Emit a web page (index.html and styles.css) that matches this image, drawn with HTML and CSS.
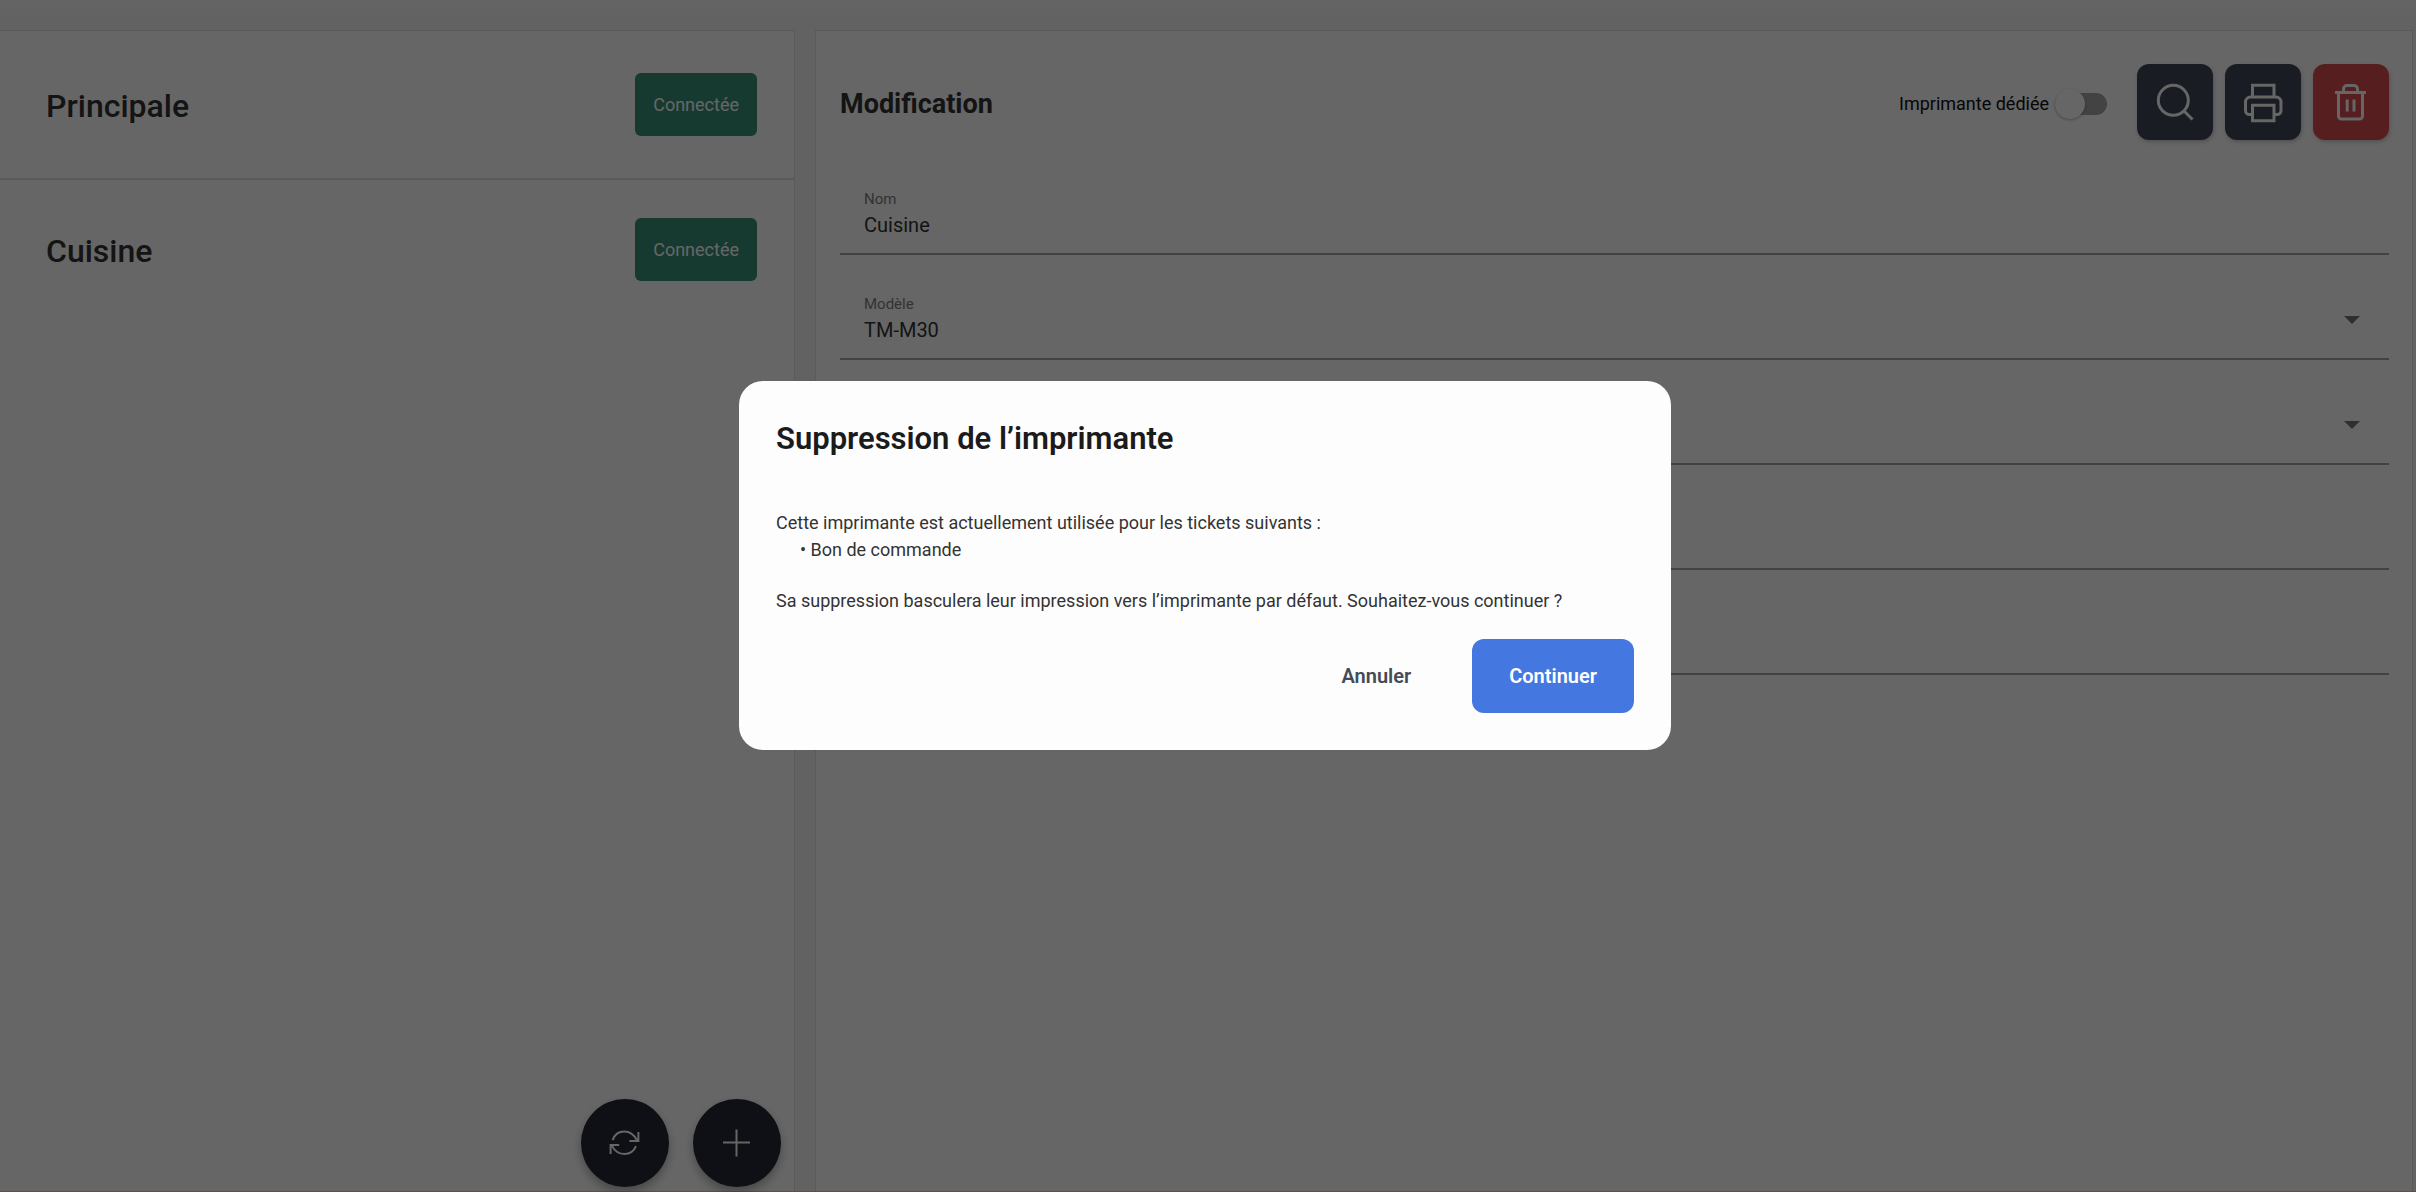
FILE: index.html
```html
<!DOCTYPE html>
<html lang="fr">
<head>
    <meta charset="UTF-8">
    <meta name="viewport" content="width=device-width, initial-scale=1.0">
    <title>Imprimantes</title>
    <link rel="stylesheet" href="styles.css">
</head>
<body>
    <div class="page">
        <aside class="printers">
            <ul class="printer-list">
                <li class="printer">
                    <span class="printer-name">Principale</span>
                    <span class="badge">Connectée</span>
                </li>
                <li class="printer">
                    <span class="printer-name">Cuisine</span>
                    <span class="badge">Connectée</span>
                </li>
            </ul>
            <div class="fabs">
                <button class="fab" type="button" aria-label="Actualiser">
                    <svg width="32" height="32" viewBox="0 0 32 32">
                        <path d="M3.6 13.2C5.4 8 10 4.6 15.4 4.6c5 0 9.300 2.800 12.600 8.600M29.400 5v9h-9"/>
                        <path d="M27 19.200c-2 5-6.400 7.800-11.600 7.800-5.200 0-9.600-2.800-12.600-8.400M1.600 27v-9h8.600"/>
                    </svg>
                </button>
                <button class="fab" type="button" aria-label="Ajouter">
                    <svg width="32" height="32" viewBox="0 0 32 32">
                        <path d="M15.500 2.500v27M2 15.500h27"/>
                    </svg>
                </button>
            </div>
        </aside>
        <main class="editor">
            <div class="editor-header">
                <h1 class="editor-title">Modification</h1>
                <label class="toggle">
                    Imprimante dédiée
                    <input class="switch" type="checkbox">
                </label>
                <div class="actions">
                    <button class="action" type="button" aria-label="Rechercher">
                        <svg width="42" height="42" viewBox="0 0 42 42">
                            <circle cx="19.300" cy="19.300" r="15"/>
                            <path d="M30 30l8.500 8.500"/>
                        </svg>
                    </button>
                    <button class="action" type="button" aria-label="Imprimer">
                        <svg width="42" height="42" viewBox="0 0 42 42">
                            <path d="M10.500 16V4.200h21.500V16"/>
                            <path d="M10 33.500H7.500a4 4 0 0 1-4-4V21a5 5 0 0 1 5-5h25.500a5 5 0 0 1 5 5v8.500a4 4 0 0 1-4 4h-2.500"/>
                            <path d="M10.500 24.200h21.500v15.600H10.500z"/>
                        </svg>
                    </button>
                    <button class="action action-danger" type="button" aria-label="Supprimer">
                        <svg width="42" height="42" viewBox="0 0 42 42">
                            <path d="M5 11.500h31M13.500 11.500V8a3.500 3.500 0 0 1 3.500-3.500h7a3.500 3.500 0 0 1 3.500 3.500v3.500"/>
                            <path d="M8.500 11.500v23.500a3 3 0 0 0 3 3h18a3 3 0 0 0 3-3V11.500M17.200 18.500v12M24 18.500v12"/>
                        </svg>
                    </button>
                </div>
            </div>
            <form class="fields">
                <div class="field">
                    <label for="name">Nom</label>
                    <input id="name" type="text" value="Cuisine">
                </div>
                <div class="field field-select">
                    <label for="model">Modèle</label>
                    <select id="model">
                        <option>TM-M30</option>
                    </select>
                </div>
                <div class="field field-select">
                    <select aria-label="Type"></select>
                </div>
                <div class="field">
                    <input type="text" aria-label="Adresse">
                </div>
                <div class="field">
                    <input type="text" aria-label="Port">
                </div>
            </form>
        </main>
    </div>

    <div class="overlay">
        <div class="dialog" role="dialog" aria-modal="true" aria-labelledby="dialog-title">
            <h2 class="dialog-title" id="dialog-title">Suppression de l’imprimante</h2>
            <div class="dialog-body">
                <p>Cette imprimante est actuellement utilisée pour les tickets suivants :</p>
                <ul class="tickets">
                    <li>• Bon de commande</li>
                </ul>
                <p>Sa suppression basculera leur impression vers l’imprimante par défaut. Souhaitez-vous continuer ?</p>
            </div>
            <div class="dialog-actions">
                <button class="btn" type="button">Annuler</button>
                <button class="btn btn-primary" type="button">Continuer</button>
            </div>
        </div>
    </div>
</body>
</html>
```
FILE: styles.css
```css
:root {
    --page-bg: #f5f5f5;
    --panel-bg: #fff;
    --border: #e0e0e0;
    --dark: #41465a;
    --darker: #262835;
    --danger: #d74b4b;
    --success: #379176;
    --primary: #4577e0;
}
* {
    box-sizing: border-box;
}
html, body {
    height: 100%;
    margin: 0;
}
body {
    font-family: Roboto, 'Liberation Sans', sans-serif;
    font-size: 18px;
    color: #333;
    background: var(--page-bg);
}
button, input, select {
    font: inherit;
    color: inherit;
}
button {
    border: none;
    cursor: pointer;
}
.page {
    display: grid;
    grid-template-columns: 795fr 1598fr;
    gap: 20px;
    min-height: 100%;
    padding: 30px 3px 0 0;
    border-bottom: 1px solid #e0c8cc;
    background: linear-gradient(#fbfbfb, var(--page-bg) 20px);
}
.printers {
    display: flex;
    flex-direction: column;
    justify-content: space-between;
    background: var(--panel-bg);
    border: 1px solid var(--border);
    border-left: none;
    border-bottom: none;
}
.printer-list {
    margin: 0;
    padding: 4px 0 0;
    list-style: none;
}
.printer {
    display: flex;
    align-items: center;
    justify-content: space-between;
    padding: 38px 37px 42px 46px;
}
.printer + .printer {
    border-top: 2px solid var(--border);
}
.printer-name {
    padding-top: 2px;
    font-size: 32px;
    font-weight: 500;
    line-height: 40px;
}
.badge {
    padding: 20px 18px;
    border-radius: 6px;
    font-size: 18px;
    line-height: 23px;
    color: #fff;
    background: var(--success);
}
.fabs {
    display: flex;
    justify-content: flex-end;
    gap: 24px;
    padding: 0 13px 4px;
}
.fab {
    display: flex;
    align-items: center;
    justify-content: center;
    width: 88px;
    height: 88px;
    padding: 0;
    border-radius: 50%;
    background: var(--darker);
    box-shadow: 0 5px 10px rgba(0, 0, 0, 0.3);
}
svg {
    fill: none;
    stroke: #fff;
    stroke-width: 2;
}
.editor {
    padding: 33px 23px 33px 24px;
    background: var(--panel-bg);
    border: 1px solid var(--border);
    border-bottom: none;
}
.editor-header {
    display: flex;
    align-items: center;
}
.editor-title {
    flex: 1;
    margin: 0;
    padding-top: 4px;
    font-size: 27px;
    font-weight: 700;
}
.toggle {
    display: flex;
    align-items: center;
    gap: 6px;
    padding-top: 3px;
    color: #111;
}
.switch {
    position: relative;
    width: 52px;
    height: 22px;
    margin: 0;
    appearance: none;
    border-radius: 11px;
    background: #a8a8a8;
}
.switch::before {
    content: '';
    position: absolute;
    top: -4px;
    left: 0;
    width: 30px;
    height: 30px;
    border-radius: 50%;
    background: #fff;
    box-shadow: 0 1px 3px rgba(0, 0, 0, 0.3);
}
.actions {
    display: flex;
    gap: 12px;
    margin-left: 30px;
}
.action {
    display: flex;
    align-items: center;
    justify-content: center;
    width: 76px;
    height: 76px;
    padding: 0;
    border-radius: 12px;
    background: var(--dark);
    box-shadow: 1px 2px 4px rgba(0, 0, 0, 0.2);
}
.action svg {
    stroke-width: 3;
}
.action-danger {
    background: var(--danger);
}
.fields {
    margin-top: 10px;
}
.field {
    display: flex;
    flex-direction: column;
    justify-content: flex-end;
    height: 105px;
    padding: 0 24px 14px;
    border-bottom: 2px solid #a6a6a6;
}
.field label {
    font-size: 15px;
    line-height: 24px;
    color: #808080;
}
.field input,
.field select {
    height: 28px;
    padding: 0;
    border: none;
    outline: none;
    appearance: none;
    font-size: 20px;
    line-height: 28px;
    background: none;
}
.field-select {
    position: relative;
}
.field-select::after {
    content: '';
    position: absolute;
    right: 29px;
    bottom: 34px;
    border: 8px solid transparent;
    border-top-color: #757575;
    border-bottom: none;
}
.overlay {
    position: fixed;
    inset: 0;
    display: flex;
    align-items: center;
    justify-content: center;
    padding: 0 6px 62px 0;
    background: rgba(0, 0, 0, 0.6);
}
.dialog {
    width: 932px;
    padding: 37px;
    border-radius: 24px;
    background: #fdfdfd;
}
.dialog-title {
    margin: 0 0 49px;
    font-size: 31px;
    font-weight: 600;
    line-height: 42px;
    color: #1b1b1b;
}
.dialog-body p,
.tickets {
    margin: 0;
    line-height: 27px;
}
.tickets {
    padding: 0 0 24px 24px;
    list-style: none;
}
.dialog-actions {
    display: flex;
    justify-content: flex-end;
    gap: 24px;
    margin-top: 25px;
}
.btn {
    padding: 0 37px;
    border-radius: 12px;
    font-size: 20px;
    font-weight: 600;
    line-height: 74px;
    color: #444b57;
    background: none;
}
.btn-primary {
    color: #fff;
    background: var(--primary);
}
```
